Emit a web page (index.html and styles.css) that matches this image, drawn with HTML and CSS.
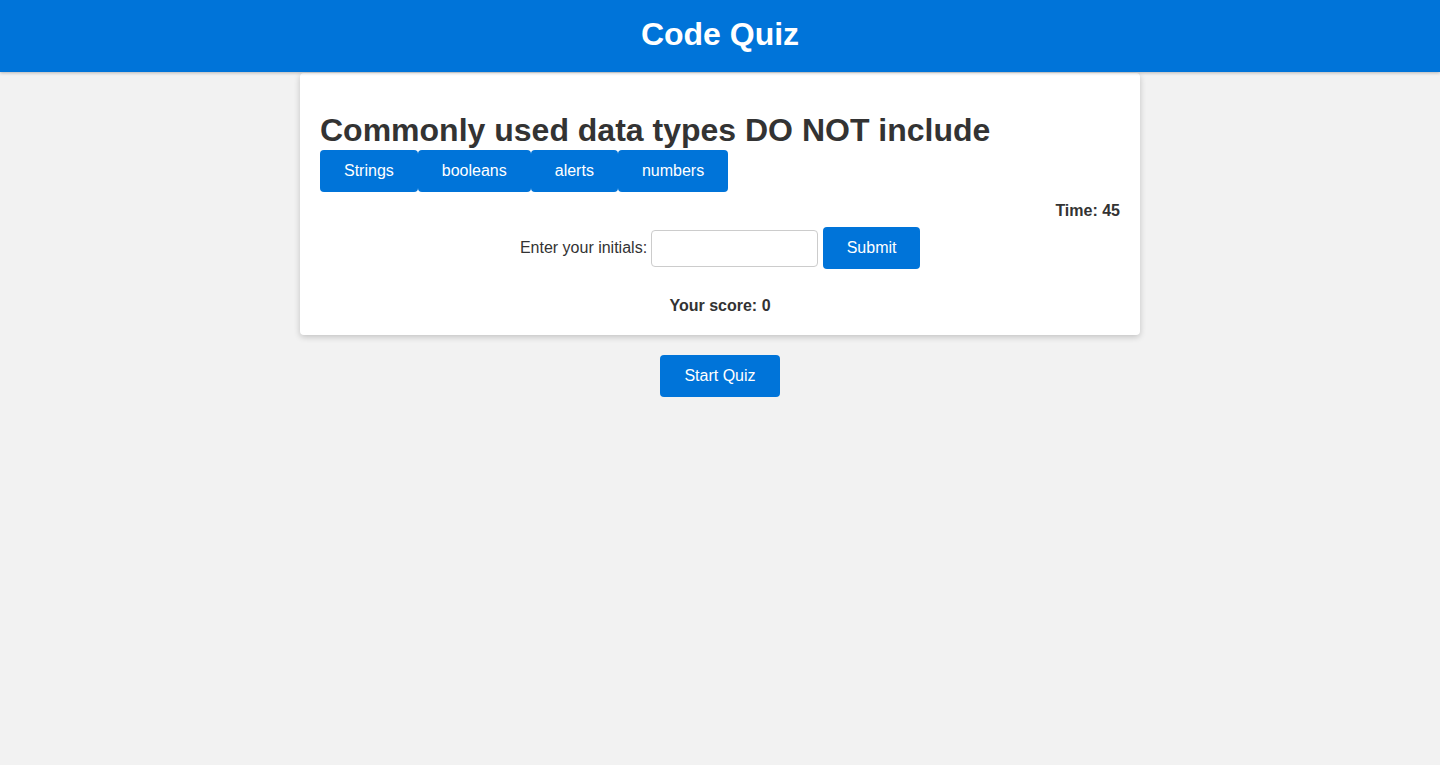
FILE: index.html
```html
<!DOCTYPE html>
<html lang="en">
<head>
<meta charset="utf-8">
<title>Code Quiz</title>
<link rel="stylesheet" href="styles.css">
</head>
<body>
<header class="site-header">
  <h1 class="site-title">Code Quiz</h1>
</header>
<main class="main">
  <section class="card">
    <h2 class="question">Commonly used data types DO NOT include</h2>
    <div class="choices">
      <button class="btn choice">Strings</button>
      <button class="btn choice">booleans</button>
      <button class="btn choice">alerts</button>
      <button class="btn choice">numbers</button>
    </div>
    <p class="time">Time: 45</p>
    <form class="initials-form">
      <label class="initials-label" for="initials">Enter your initials:</label>
      <input class="initials-input" id="initials" type="text">
      <button class="btn submit" type="button">Submit</button>
    </form>
    <p class="score">Your score: 0</p>
  </section>
  <button class="btn start">Start Quiz</button>
</main>
</body>
</html>
```
FILE: styles.css
```css
* { box-sizing: border-box; }
html, body {
  margin: 0;
  padding: 0;
  background: #f2f2f2;
  font-family: "Liberation Sans", Arial, Helvetica, sans-serif;
  color: #333;
}
.site-header {
  background: #0074d9;
  color: #fff;
  height: 72px;
  padding-top: 16px;
  text-align: center;
  box-shadow: 0 1px 3px rgba(0,0,0,0.25);
  position: relative;
  z-index: 1;
}
.site-title {
  margin: 0;
  font-size: 32px;
  font-weight: bold;
  line-height: 37px;
}
.main {
  display: flex;
  flex-direction: column;
  align-items: center;
  padding-top: 1px;
}
.card {
  width: 840px;
  background: #fff;
  border-radius: 4px;
  box-shadow: 0 2px 6px rgba(0,0,0,0.2);
  padding: 20px;
}
.question {
  margin: 19px 0 1px;
  font-size: 32px;
  line-height: 37px;
  font-weight: bold;
  color: #333;
}
.choices {
  display: flex;
}
.btn {
  font-family: "Liberation Sans", Arial, Helvetica, sans-serif;
  font-size: 16px;
  line-height: 18px;
  background: #0074d9;
  color: #fff;
  border: none;
  border-radius: 4px;
  cursor: pointer;
}
.choice {
  padding: 12px 24px;
}
.time {
  margin: 10px 0 7px;
  text-align: right;
  font-weight: bold;
  font-size: 16px;
  line-height: 18px;
}
.initials-form {
  display: flex;
  justify-content: center;
  align-items: center;
  gap: 4px;
  height: 42px;
}
.initials-label {
  font-size: 16px;
  color: #333;
}
.initials-input {
  width: 167px;
  height: 37px;
  border: 1px solid #ccc;
  border-radius: 4px;
  padding: 4px 8px;
  font-size: 16px;
  margin-right: 1px;
}
.submit {
  width: 97px;
  height: 42px;
  padding: 0;
}
.score {
  margin: 28px 0 0;
  text-align: center;
  font-weight: bold;
  font-size: 16px;
  line-height: 18px;
}
.start {
  margin-top: 20px;
  width: 120px;
  height: 42px;
  padding: 0;
}
```
